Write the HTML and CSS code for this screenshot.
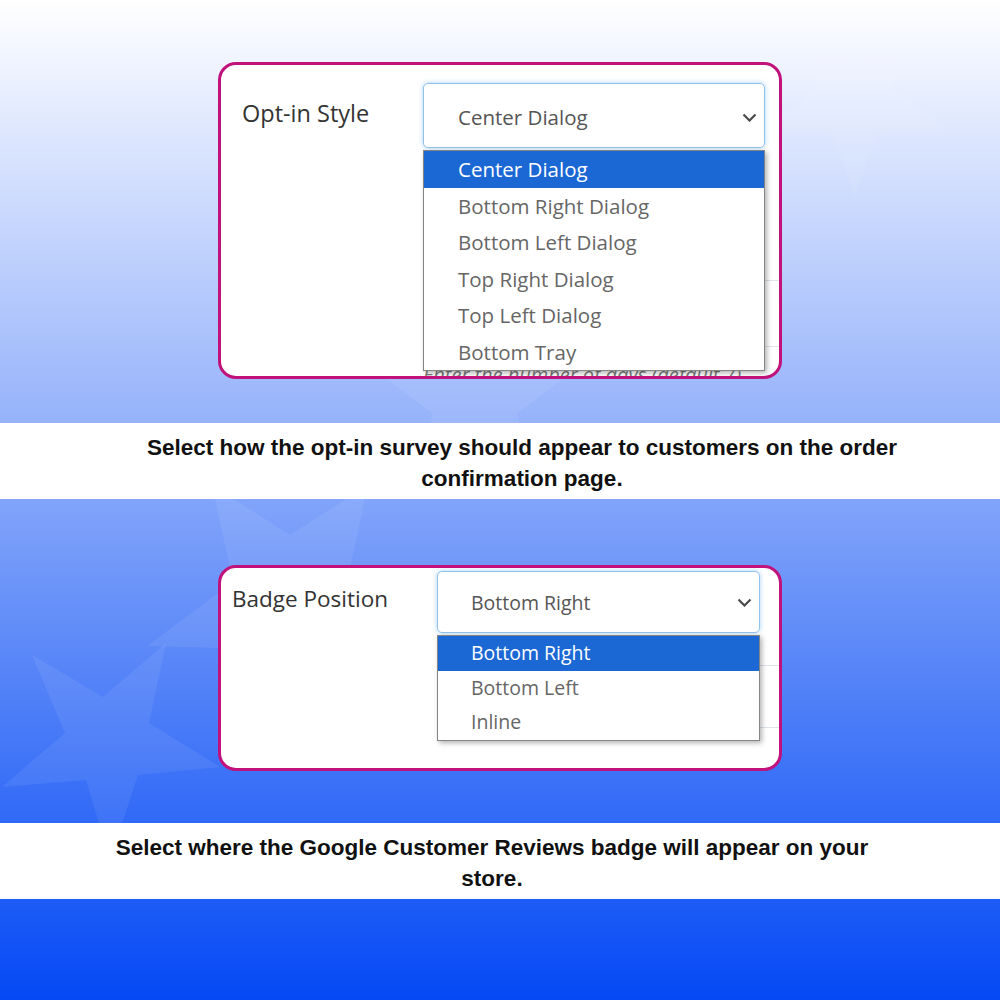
FILE: index.html
```html
<!doctype html>
<html lang="en">
  <head>
    <meta charset="UTF-8" />
    <meta name="viewport" content="width=device-width, initial-scale=1.0" />
    <title>Google Customer Reviews – Display Settings</title>
    <link rel="stylesheet" href="styles.css">
  </head>
  <body>
    <!-- faint stars behind everything -->
    <svg class="stars" width="1000" height="1000" viewBox="0 0 1000 1000" aria-hidden="true">
      <polygon points="32,655 103,697 166,643 149,723 220,767 138,775 110,860 86,780 2,787 65,733" />
      <polygon points="212,485 290,535 368,485 347,582 433,646 325,649 290,750 255,649 147,646 233,582" />
      <polygon points="475,290 501,364 580,366 517,414 540,489 475,445 410,489 433,414 370,366 449,364" />
      <polygon points="855,197 832,132 763,130 818,88 798,22 855,60 912,22 892,88 947,130 878,132" />
    </svg>

    <section class="panel panel--optin">
      <div class="card card--optin">
        <label class="field-label">Opt-in Style</label>
        <div class="field">
          <div class="select">
            <span>Center Dialog</span>
            <svg class="chevron" width="15" height="9" viewBox="0 0 15 9"><path d="M1.5 1.5l6 6 6-6" /></svg>
          </div>
          <div class="field-rows">
            <div class="row-line" style="height: 132px"></div>
            <div class="row-line" style="height: 65px"></div>
            <p class="hint">Enter the number of days (default 7).</p>
          </div>
          <ul class="options">
            <li class="selected">Center Dialog</li>
            <li>Bottom Right Dialog</li>
            <li>Bottom Left Dialog</li>
            <li>Top Right Dialog</li>
            <li>Top Left Dialog</li>
            <li>Bottom Tray</li>
          </ul>
        </div>
      </div>
    </section>

    <p class="caption caption--optin">
      Select how the opt-in survey should appear to customers on the order confirmation page.
    </p>

    <section class="panel panel--badge">
      <div class="card card--badge">
        <label class="field-label">Badge Position</label>
        <div class="field">
          <div class="select">
            <span>Bottom Right</span>
            <svg class="chevron" width="15" height="9" viewBox="0 0 15 9"><path d="M1.5 1.5l6 6 6-6" /></svg>
          </div>
          <div class="field-rows">
            <div class="row-line" style="height: 32px"></div>
            <div class="row-line" style="height: 61px"></div>
          </div>
          <ul class="options">
            <li class="selected">Bottom Right</li>
            <li>Bottom Left</li>
            <li>Inline</li>
          </ul>
        </div>
      </div>
    </section>

    <p class="caption caption--badge">
      Select where the Google Customer Reviews badge will appear on your store.
    </p>

    <section class="panel panel--end"></section>
  </body>
</html>
```

FILE: styles.css
```css
body {
  margin: 0;
  position: relative;
  min-height: 1000px;
  font-family: 'Open Sans', 'Noto Sans', sans-serif;
  background: linear-gradient(180deg, #ffffff 0%, #0449f5 100%);
}
.stars {
  position: absolute;
  top: 0;
  left: 0;
  z-index: 0;
}
.stars polygon {
  fill: #ffffff;
  opacity: 0.07;
}
.panel,
.caption {
  position: relative;
  z-index: 1;
  box-sizing: border-box;
}
.panel--optin {
  height: 423px;
  padding-top: 62px;
}
.panel--badge {
  height: 324px;
  padding-top: 66px;
}
.panel--end {
  height: 101px;
}

/* settings card */
.card {
  width: 564px;
  margin: 0 auto;
  box-sizing: border-box;
  display: flex;
  align-items: flex-start;
  background-color: #fff;
  border: 3px solid #c1127b;
  border-radius: 18px;
  overflow: hidden;
}
.card--optin {
  height: 317px;
  padding: 18px 14px 0 21px;
}
.card--badge {
  height: 206px;
  padding: 3px 19px 0 11px;
}
.field-label {
  flex: none;
  color: #333;
}
.card--optin .field-label {
  width: 181px;
  margin-top: 14px;
  font-size: 23.5px;
  line-height: 32px;
}
.card--badge .field-label {
  width: 205px;
  margin-top: 13px;
  font-size: 22.5px;
  line-height: 30px;
}
.field {
  position: relative;
  flex: none;
}
.card--optin .field {
  width: 342px;
}
.card--badge .field {
  width: 323px;
}

/* closed select */
.select {
  box-sizing: border-box;
  display: flex;
  align-items: center;
  justify-content: space-between;
  background-color: #fff;
  border: 1px solid #92c2ec;
  border-radius: 5px;
  box-shadow: 0 0 5px rgba(102, 175, 233, 0.55);
  color: #555;
}
.card--optin .select {
  height: 65px;
  padding: 3px 7px 0 34px;
  font-size: 20.5px;
}
.card--badge .select {
  height: 62px;
  padding: 1px 7px 0 33px;
  font-size: 19.5px;
}
.chevron path {
  fill: none;
  stroke: #4a4a4a;
  stroke-width: 2.2;
}

/* rows of the form behind the open list */
.card--optin .field-rows {
  margin-right: -14px;
}
.card--badge .field-rows {
  margin-right: -19px;
}
.row-line {
  border-bottom: 1px solid #dfe4ea;
}
.hint {
  margin: 16px 0 0;
  font-size: 20px;
  line-height: 24px;
  font-style: italic;
  color: #7a7a7a;
}

/* open option list */
.options {
  position: absolute;
  left: 0;
  right: 0;
  margin: 0;
  padding: 0;
  list-style: none;
  background-color: #fff;
  border: 1px solid #858585;
  box-shadow: 2px 2px 5px rgba(0, 0, 0, 0.3);
  color: #666;
}
.card--optin .options {
  top: 67px;
  font-size: 20.5px;
}
.card--badge .options {
  top: 64px;
  font-size: 19.5px;
}
.card--optin .options li {
  height: 36.5px;
  line-height: 36.5px;
  padding-left: 34px;
}
.card--badge .options li {
  height: 34.7px;
  line-height: 34.7px;
  padding-left: 33px;
}
.options li.selected {
  background-color: #1b67d4;
  color: #fff;
}

/* white caption bands */
.caption {
  height: 76px;
  margin: 0;
  padding-top: 9px;
  background-color: #fff;
  font-family: 'Liberation Sans', Arial, sans-serif;
  font-weight: bold;
  font-size: 22.5px;
  line-height: 31px;
  text-align: center;
  color: #111;
}
.caption--optin {
  padding-left: 132px;
  padding-right: 88px;
}
.caption--badge {
  padding-left: 102px;
  padding-right: 118px;
}
```
